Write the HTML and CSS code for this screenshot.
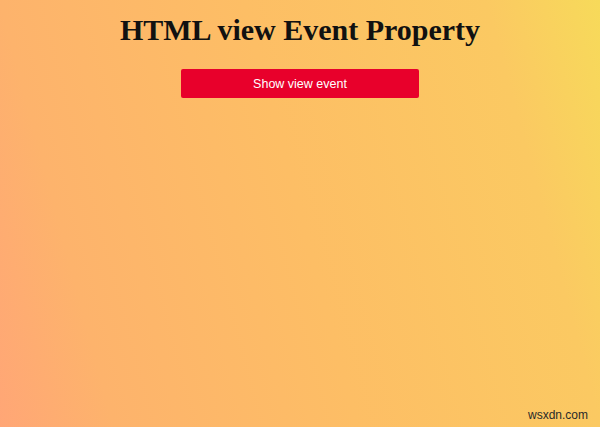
FILE: index.html
```html
<!DOCTYPE html>
<html lang="en">
<head>
<meta charset="utf-8">
<title>HTML view Event Property</title>
<link rel="stylesheet" href="styles.css">
</head>
<body>
<main class="page">
  <h1 class="title">HTML view Event Property</h1>
  <button class="show-btn" type="button">Show view event</button>
</main>
<span class="watermark">wsxdn.com</span>
</body>
</html>
```
FILE: styles.css
```css
html, body {
  margin: 0;
  height: 100%;
}
body {
  background: linear-gradient(75deg, #ffa676 0%, #fdb36c 16%, #fdbe65 50%, #fbc962 84%, #f7da5a 100%);
  font-family: "Liberation Serif", "Times New Roman", serif;
  position: relative;
  overflow: hidden;
}
.page {
  display: flex;
  flex-direction: column;
  align-items: center;
  padding-top: 13px;
}
.title {
  margin: 0;
  font-size: 30px;
  font-weight: bold;
  color: #111;
}
.show-btn {
  margin-top: 22px;
  width: 238px;
  height: 29px;
  border: none;
  border-radius: 2px;
  background: #e8002b;
  color: #fff;
  font-family: "Liberation Sans", Arial, sans-serif;
  font-size: 12.5px;
  padding: 0;
}
.watermark {
  position: absolute;
  right: 12px;
  bottom: 5px;
  font-family: "Liberation Sans", Arial, sans-serif;
  font-size: 12px;
  color: #2a2a2a;
}
```
